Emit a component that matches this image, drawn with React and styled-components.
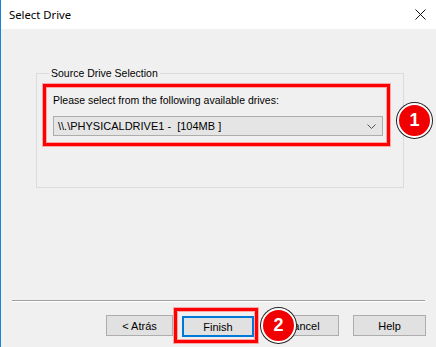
import React from 'react';
import styled, { createGlobalStyle } from 'styled-components';

const GlobalStyle = createGlobalStyle`
  html, body {
    margin: 0;
    padding: 0;
    background: #f0f0f0;
  }
`;

const Window = styled.div`
  width: 436px;
  height: 347px;
  box-sizing: border-box;
  border-left: 1px solid #1883d7;
  background: #f0f0f0;
  display: flex;
  flex-direction: column;
  font-family: "Liberation Sans", Arial, sans-serif;
  font-size: 10.5px;
  color: #000;
  overflow: hidden;
`;

const TitleBar = styled.div`
  height: 29px;
  flex: none;
  background: #fff;
  display: flex;
  align-items: center;
  justify-content: space-between;
  padding: 0 10px 0 8px;
`;

const Title = styled.span`
  font-family: "Noto Sans", "Open Sans", sans-serif;
  font-size: 11.3px;
  color: #000;
  margin-top: -1px;
`;

const CloseIcon = styled.svg`
  width: 11px;
  height: 11px;
  margin-top: -1px;
`;

const Body = styled.div`
  flex: 1;
  display: flex;
  flex-direction: column;
  padding: 37px 0 0 35px;
`;

const GroupBox = styled.fieldset`
  width: 368px;
  height: 122px;
  box-sizing: border-box;
  margin: 0;
  padding: 4px 13px 0 6px;
  border: 1px solid #dcdcdc;
`;

const Legend = styled.legend`
  padding: 0 2px;
  margin-left: 6px;
  line-height: 14px;
  color: #000;
`;

const Highlight = styled.div`
  position: relative;
  border: 3px solid #ff0000;
  box-shadow: 0 0 0 1px rgba(255, 80, 80, 0.45), inset 0 0 0 1px rgba(255, 80, 80, 0.45);
  padding: ${p => p.$pad};
`;

const FieldLabel = styled.div`
  line-height: 14px;
  margin-bottom: 9px;
`;

const Select = styled.div`
  height: 20px;
  box-sizing: border-box;
  border: 1px solid #adadad;
  background: #e5e5e5;
  display: flex;
  align-items: center;
  justify-content: space-between;
  padding: 0 6px 0 4px;
  white-space: pre;
  font-size: 11px;
`;

const Chevron = styled.svg`
  width: 9px;
  height: 5px;
`;

const Badge = styled.div`
  position: absolute;
  left: ${p => p.$left}px;
  top: ${p => p.$top}px;
  width: 31px;
  height: 31px;
  border-radius: 50%;
  background: #f00000;
  border: 2px solid #fff;
  box-shadow: 0 0 0 1px #222;
  display: flex;
  align-items: center;
  justify-content: center;
  color: #fff;
  font-family: "Liberation Sans", Arial, sans-serif;
  font-weight: bold;
  font-size: 18px;
  z-index: 2;
`;

const Footer = styled.div`
  flex: none;
  display: flex;
  flex-direction: column;
`;

const Separator = styled.div`
  margin: 0 11px 0 11px;
  height: 1px;
  background: #a0a0a0;
  border-bottom: 1px solid #fff;
`;

const ButtonRow = styled.div`
  display: flex;
  justify-content: flex-end;
  align-items: center;
  padding: 6px 10px 4px 0;
`;

const Button = styled.div`
  width: ${p => p.$w}px;
  height: 21px;
  box-sizing: border-box;
  margin-left: ${p => p.$gap || 0}px;
  border: ${p => (p.$default ? '2px solid #0078d7' : '1px solid #adadad')};
  background: #e1e1e1;
  display: flex;
  align-items: center;
  justify-content: center;
  flex: none;
  font-size: 11px;
`;

const FinishWrap = styled(Highlight)`
  margin-left: 1px;
  flex: none;
`;

export default function App() {
  return (
    <>
      <GlobalStyle />
      <Window>
        <TitleBar>
          <Title>Select Drive</Title>
          <CloseIcon viewBox="0 0 11 11">
            <path d="M0.5 0.5 L10.5 10.5 M10.5 0.5 L0.5 10.5" stroke="#111" strokeWidth="1" fill="none" />
          </CloseIcon>
        </TitleBar>
        <Body>
          <GroupBox>
            <Legend>Source Drive Selection</Legend>
            <Highlight $pad="6px 4px 7px 7px">
              <FieldLabel>Please select from the following available drives:</FieldLabel>
              <Select>
                <span>{'\\\\.\\PHYSICALDRIVE1 -  [104MB ]'}</span>
                <Chevron viewBox="0 0 9 5">
                  <path d="M0.5 0.5 L4.5 4.5 L8.5 0.5" stroke="#555" strokeWidth="1" fill="none" />
                </Chevron>
              </Select>
              <Badge $left={351} $top={16}>1</Badge>
            </Highlight>
          </GroupBox>
        </Body>
        <Footer>
          <Separator />
          <ButtonRow>
            <Button $w={67}>&lt; Atrás</Button>
            <FinishWrap $pad="5px 1px 3px 5px">
              <Button $w={72} $default>Finish</Button>
              <Badge $left={84} $top={-3}>2</Badge>
            </FinishWrap>
            <Button $w={73} $gap={8}>Cancel</Button>
            <Button $w={73} $gap={14}>Help</Button>
          </ButtonRow>
        </Footer>
      </Window>
    </>
  );
}
